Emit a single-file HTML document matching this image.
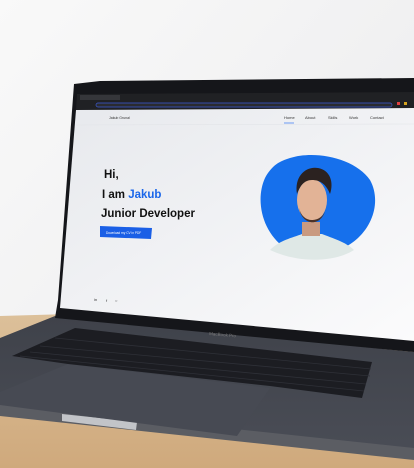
<!DOCTYPE html>
<html><head><meta charset="utf-8"><style>
html,body{margin:0;padding:0;width:414px;height:468px;overflow:hidden;background:#f2f2f2}
svg{display:block}
text{font-family:"Liberation Sans",sans-serif}
</style></head><body>
<svg width="414" height="468" viewBox="0 0 414 468">
<defs>
<linearGradient id="bg" x1="0" y1="0" x2="1" y2="1"><stop offset="0" stop-color="#f9f9f9"/><stop offset="1" stop-color="#e9e9eb"/></linearGradient>
<linearGradient id="wood" x1="0" y1="0" x2="0" y2="1"><stop offset="0" stop-color="#dcc09a"/><stop offset="1" stop-color="#cfa97c"/></linearGradient>
<linearGradient id="deck" x1="0" y1="0" x2="0" y2="1"><stop offset="0" stop-color="#3f424a"/><stop offset="1" stop-color="#4a4d56"/></linearGradient>
<linearGradient id="scr" x1="0" y1="0" x2="1" y2="1"><stop offset="0" stop-color="#e7e9ed"/><stop offset="1" stop-color="#fbfbfc"/></linearGradient>
</defs>
<rect width="414" height="468" fill="url(#bg)"/>
<!-- wood -->
<polygon points="0,316 70,314 414,350 414,468 0,468" fill="url(#wood)"/>
<!-- deck -->
<polygon points="0,338 55,316 414,352 414,456 0,410" fill="url(#deck)"/>
<!-- front edge -->
<polygon points="0,404 414,448 414,460 0,416" fill="#5b5d63"/>
<polygon points="62,414 137,422 136,430 62,421" fill="#c2c4c8"/>
<!-- trackpad -->
<polygon points="68,364 270,388 237,436 0,405 0,392" fill="#474a53"/>
<!-- keyboard -->
<polygon points="75,328 372,362 362,398 270,386 68,364 12,356" fill="#1c1d22"/>
<g stroke="#2e3037" stroke-width="0.8">
<line x1="40" y1="346" x2="370" y2="376"/>
<line x1="30" y1="352" x2="366" y2="384"/>
<line x1="55" y1="338" x2="371" y2="369"/>
<line x1="20" y1="356" x2="364" y2="391"/>
</g>
<!-- lid -->
<polygon points="74,84 100,81 414,78 414,352 55,318 58,300" fill="#15161a"/>
<text x="209" y="335" font-size="4.5" fill="#777" transform="rotate(5 209 335)">MacBook Pro</text>
<!-- browser chrome -->
<polygon points="77,94 414,92 414,108 76,110" fill="#202124"/>
<polygon points="80,95 120,95 120,100 80,100" fill="#35363a"/>
<rect x="96" y="103" width="296" height="4" rx="2" fill="#2a2b2f" stroke="#3b5bd6" stroke-width="0.7"/>
<rect x="397" y="102" width="3" height="3" fill="#e04040"/>
<rect x="404" y="102" width="3" height="3" fill="#d6a520"/>
<!-- screen -->
<polygon points="76,110 414,108 414,341 60,308" fill="url(#scr)"/>
<line x1="76" y1="125" x2="414" y2="124" stroke="#e2e4e8" stroke-width="0.6"/>
<text x="109" y="119" font-size="3.5" fill="#333">Jakub Grunal</text>
<g font-size="4" fill="#333">
<text x="284" y="119">Home</text><text x="305" y="119">About</text><text x="328" y="119">Skills</text><text x="349" y="119">Work</text><text x="370" y="119">Contact</text>
</g>
<line x1="284" y1="123" x2="294" y2="123" stroke="#1463f3" stroke-width="0.6"/>
<g font-weight="bold" fill="#111" font-size="11.5">
<text x="104" y="178">Hi,</text>
<text x="102" y="198">I am <tspan fill="#1a66ea">Jakub</tspan></text>
<text x="101" y="217">Junior Developer</text>
</g>
<polygon points="100,226 152,228 151,239 100,237" fill="#1a5fe6"/>
<text x="106" y="234" font-size="3.2" fill="#fff">Download my CV in PDF</text>
<g font-size="4" fill="#333"><text x="94" y="301">in</text><text x="106" y="302">f</text><text x="115" y="302">○</text></g>
<!-- blob -->
<path d="M290,158 C315,150 355,158 370,180 C380,198 375,222 358,238 C340,255 305,262 285,248 C262,232 255,200 265,178 C272,165 280,161 290,158 Z" fill="#1670ec"/>
<!-- person -->
<path d="M270,250 C280,240 292,238 302,234 L322,234 C332,238 346,242 354,250 C335,262 300,264 270,250 Z" fill="#dfe8e6"/>
<rect x="302" y="222" width="18" height="14" fill="#c99a80"/>
<ellipse cx="312" cy="200" rx="15" ry="21" fill="#e2b396"/>
<path d="M297,194 C294,176 306,166 318,168 C330,170 334,182 330,194 C326,184 320,180 312,180 C304,180 300,186 297,194 Z" fill="#2b2220"/>
<path d="M299,208 C302,226 322,228 326,208 C324,218 316,220 312,220 C306,220 301,216 299,208 Z" fill="#4a3228"/>
</svg>
</body></html>
